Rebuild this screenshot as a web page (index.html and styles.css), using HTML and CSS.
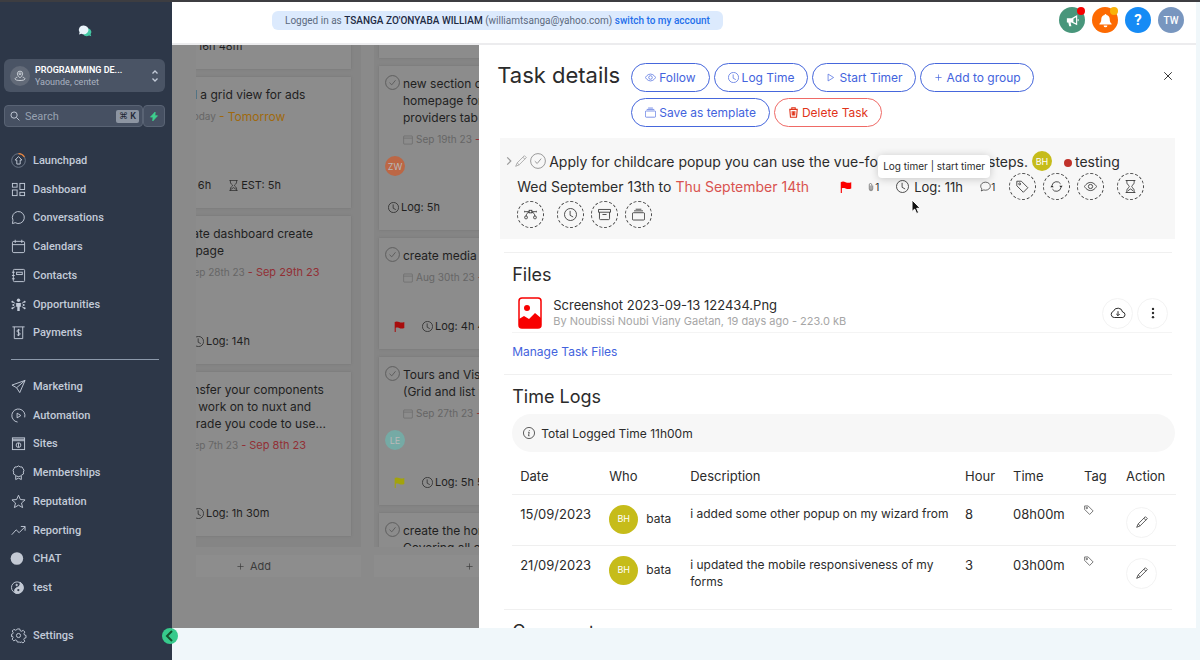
FILE: index.html
```html
<!DOCTYPE html>
<html lang="en">
<head>
    <meta charset="UTF-8">
    <meta name="viewport" content="width=device-width, initial-scale=1.0">
    <title>Task details</title>
    <link rel="stylesheet" href="styles.css">
</head>
<body>
    <!-- Icon sprite -->
    <svg class="sprite" aria-hidden="true">
        <symbol id="i-clock" viewBox="0 0 16 16"><circle cx="8" cy="8" r="7.4"/><path d="M7.5 3.5V9l3.8 2.1"/></symbol>
        <symbol id="i-eye" viewBox="0 0 16 16"><path d="M.6 8S3.300 3 8 3s7.400 5 7.400 5-2.700 5-7.400 5S.6 8 .6 8z"/><circle cx="8" cy="8" r="2.600"/></symbol>
        <symbol id="i-play" viewBox="0 0 16 16"><path d="M4.500 3v10l8-5z"/></symbol>
        <symbol id="i-plus" viewBox="0 0 16 16"><path d="M8 3.500v9M3.500 8h9"/></symbol>
        <symbol id="i-stack" viewBox="0 0 16 16"><path d="M4.500 1.500h7M2.500 3.500h11"/><rect x=".5" y="5.800" width="15" height="9" rx="1.300"/></symbol>
        <symbol id="i-trash" viewBox="0 0 16 16"><path d="M1.800 3.500h12.400M2.600 3.500l1 11.500h8.800l1-11.500M5.500 3V1h5v2M6 6l.3 6.500M8 6v6.500M10 6l-.3 6.500" stroke-width="1.600"/></symbol>
        <symbol id="i-x" viewBox="0 0 16 16"><path d="M2 2l12 12M14 2L2 14"/></symbol>
        <symbol id="i-right" viewBox="0 0 10 16"><path d="M2 2l6 6-6 6"/></symbol>
        <symbol id="i-pencil" viewBox="0 0 16 16"><path d="M12.500 .9l2.600 2.600-9.600 9.600L.9 15.100l2-4.600zM10.500 2.900l2.600 2.600M2.900 10.500l2.600 2.600"/></symbol>
        <symbol id="i-check" viewBox="0 0 16 16"><circle cx="8" cy="8" r="7.400"/><path d="M4.800 8.200l2.400 2.300 4-4.900"/></symbol>
        <symbol id="i-clip" viewBox="0 0 16 16"><path d="M4.500 3.500a2.500 2.500 0 0 1 5 0V12a1.500 1.500 0 0 1-3 0V5M4.500 3.500V12a3.500 3.500 0 0 0 7 0V5"/></symbol>
        <symbol id="i-chat" viewBox="0 0 16 16"><path d="M2.700 11.500A6.300 6.300 0 0 1 1 7.500C1 4.300 4.100 1.700 8 1.700s7 2.600 7 5.800-3.100 5.900-7 5.900c-.9 0-1.700-.1-2.500-.4L1.700 14.500c.7-1 1-1.800 1-3z"/></symbol>
        <symbol id="i-tag" viewBox="0 0 16 16"><path d="M1 1.500h5.600l8 8-5.600 5.600-8-8z"/><circle cx="4.500" cy="4.800" r="1.200"/></symbol>
        <symbol id="i-repeat" viewBox="0 0 16 16"><path d="M2.500 6.500a5.800 5.800 0 0 1 10.500-1.800M13.500 9.500A5.800 5.800 0 0 1 3 11.300"/><path d="M11.500 7.200h4L13.500 9.700zM.5 8.800h4L2.500 6.300z" fill="currentColor" stroke="none"/></symbol>
        <symbol id="i-hourglass" viewBox="0 0 16 16"><path d="M2 .6h12M2 15.400h12M3.500.6v2.500c0 2.800 3 3.200 3 4.900s-3 2.100-3 4.900v2.500M12.500.6v2.500c0 2.800-3 3.200-3 4.900s3 2.100 3 4.900v2.500M4.500 13.500L8 11l3.500 2.500"/></symbol>
        <symbol id="i-bezier" viewBox="0 0 16 16"><path d="M6 4.500H2M10 4.500h4M6.500 5C4 5.500 2.800 7.500 2.600 10M9.500 5c2.500.5 3.700 2.500 3.900 5"/><rect x="6.300" y="2.800" width="3.400" height="3.200"/><rect x=".9" y="10" width="3.200" height="3.200" rx="1"/><rect x="11.900" y="10" width="3.200" height="3.200" rx="1"/><circle cx="1" cy="4.500" r=".6"/><circle cx="15" cy="4.500" r=".6"/></symbol>
        <symbol id="i-archive" viewBox="0 0 16 16"><path d="M.6 1.800h14.800v3.400H.6zM1.800 5.200v7.800a1.300 1.300 0 0 0 1.300 1.300h9.800a1.300 1.300 0 0 0 1.300-1.300V5.200M5.500 8h5"/></symbol>
        <symbol id="i-cal" viewBox="0 0 16 16"><rect x="1" y="1.500" width="14" height="13" rx="1.200"/><path d="M1 5h14"/></symbol>
        <symbol id="i-flag" viewBox="0 0 16 16"><path d="M1 1.500c2-1 4-1 6.500 0s4.500 1 7.500 0v8.500c-3 1-5 1-7.500 0s-3.500-.8-5-.3V16H1z" fill="currentColor" stroke="none"/></symbol>
        <symbol id="i-info" viewBox="0 0 16 16"><circle cx="8" cy="8" r="7.400"/><path d="M6.800 7h1.500l-1 4.700h1.500M8.500 4.200v1"/></symbol>
        <symbol id="i-cloud" viewBox="0 0 16 16"><path d="M4.700 12.500H4A3.200 3.200 0 0 1 3.400 6.300 4.800 4.800 0 0 1 12.600 7a2.800 2.800 0 0 1 .2 5.500H4.700M8 6.200v4.300M6.300 9L8 10.700 9.700 9"/></symbol>
        <symbol id="i-dots" viewBox="0 0 16 16"><g fill="currentColor" stroke="none"><circle cx="8" cy="2.500" r="1.600"/><circle cx="8" cy="8" r="1.600"/><circle cx="8" cy="13.500" r="1.600"/></g></symbol>
    </svg>

    <aside class="sidebar">
        <svg class="logo" viewBox="0 0 14 12" aria-hidden="true">
            <path d="M8 3.500a4 3.800 0 0 1 4.600 5.800l.7 1.900-2.200-.7A4.500 4.200 0 0 1 5 9z" fill="#45c9a5" stroke="none"/>
            <path d="M5.500.5a4.800 4.400 0 1 1-2 8.300L1 9.600l.6-2.200A4.600 4.400 0 0 1 5.500.5z" fill="#eaf4fb" stroke="none"/>
        </svg>

        <button class="account">
            <span class="account-pin">
                <svg viewBox="0 0 16 16"><path d="M8 10.500S4.500 7.600 4.500 5a3.500 3.500 0 0 1 7 0c0 2.600-3.500 5.500-3.500 5.500z"/><circle cx="8" cy="5" r="1.300"/><path d="M4.500 9.500c-2 .5-3 1.400-3 2.300C1.500 13.300 4.500 14 8 14s6.500-.7 6.500-2.200c0-.9-1-1.800-3-2.300"/></svg>
            </span>
            <span class="account-text">
                <strong>PROGRAMMING DE...</strong>
                <span>Yaounde, centet</span>
            </span>
            <svg class="account-arrows" viewBox="0 0 8 14"><path d="M1.500 4.500L4 2l2.500 2.500M1.500 9.500L4 12l2.500-2.500"/></svg>
        </button>

        <div class="search-row">
            <label class="search">
                <svg viewBox="0 0 16 16"><circle cx="6.500" cy="6.500" r="5"/><path d="M10.300 10.300l4.700 4.700"/></svg>
                <input type="search" placeholder="Search" aria-label="Search">
                <kbd>⌘ K</kbd>
            </label>
            <button class="bolt" aria-label="Quick actions">
                <svg viewBox="0 0 10 12"><path d="M6.500 0L.3 6.800h3.400L3.300 12 9.700 5H6.300z" fill="#3ecf8e" stroke="#3ecf8e"/></svg>
            </button>
        </div>

        <nav class="nav nav-main">
            <a href="#"><svg viewBox="0 0 16 16"><circle cx="8" cy="8" r="7.300" stroke="#6d7889"/><path d="M8 .7a7.300 7.300 0 0 1 6.300 3.600" stroke="#e8833a" stroke-width="1.400"/><path d="M8 3.800l3.600 3.700H9.800v4.300H6.200V7.500H4.400z"/></svg>Launchpad</a>
            <a href="#"><svg viewBox="0 0 16 16"><rect x="1.500" y="1.500" width="5" height="4"/><rect x="1.500" y="8.500" width="5" height="6"/><rect x="9.500" y="1.500" width="5" height="6.500"/><rect x="9.500" y="11" width="5" height="3.500"/></svg>Dashboard</a>
            <a href="#"><svg viewBox="0 0 16 16"><path d="M4.500 13.500a6.400 6.400 0 1 0-2.400-2.600L1.500 14.500z"/></svg>Conversations</a>
            <a href="#"><svg viewBox="0 0 16 16"><rect x="1.500" y="2.500" width="13" height="12" rx="1.500"/><path d="M1.500 6h13M4.500.8v3.400M11.500.8v3.400"/></svg>Calendars</a>
            <a href="#"><svg viewBox="0 0 16 16"><rect x="2.500" y="1.500" width="12" height="13" rx="1"/><rect x="6" y="4.500" width="6" height="2.500"/><path d="M1 4.500h3M1 8h3M1 11.500h3"/></svg>Contacts</a>
            <a href="#"><svg viewBox="0 0 16 16"><g fill="currentColor" stroke="none"><circle cx="8" cy="3.500" r="1.800"/><path d="M5.500 6.500h5v4H9.300V15H6.700v-4.500H5.500z"/><circle cx="1.500" cy="5" r="1.100"/><circle cx="14.500" cy="5" r="1.100"/><circle cx="1.500" cy="12" r="1.100"/><circle cx="14.500" cy="12" r="1.100"/><circle cx="2.500" cy="8.500" r="1.100"/><circle cx="13.500" cy="8.500" r="1.100"/></g><path d="M1.500 5l3 1.800M14.500 5l-3 1.800M1.500 12l3-1.800M14.500 12l-3-1.800"/></svg>Opportunities</a>
            <a href="#"><svg viewBox="0 0 16 16"><path d="M1.500 2h13M3.500 2v12.500h9V2M9.800 5.800C9.300 5 6.300 4.800 6.300 6.500S9.800 7.800 9.800 9.500s-3 1.600-3.600.6M8 4.200v7.600"/></svg>Payments</a>
        </nav>
        <hr class="nav-line">
        <nav class="nav nav-more">
            <a href="#"><svg viewBox="0 0 16 16"><path d="M15 1.500L1 6.500l5 2.800 3.300 5.200zM15 1.500L6 9.300"/></svg>Marketing</a>
            <a href="#"><svg viewBox="0 0 16 16"><path d="M7 15A7 7 0 1 1 14.600 10M6.500 5.500l4 2.500-4 2.500z"/></svg>Automation</a>
            <a href="#"><svg viewBox="0 0 16 16"><rect x="1.500" y="2" width="13" height="12.500"/><path d="M1.500 5h13M1.500 3.500h13"/><circle cx="8" cy="9.700" r="2.500"/><path d="M8 7.500v4.500"/></svg>Sites</a>
            <a href="#"><svg viewBox="0 0 16 16"><path d="M8 1l1.800 1 2 .1 1 1.800 1 1.700-.6 2 .1 2-1.800 1.100L9.800 12 8 12.300 6.200 12l-1.700-1.300-1.800-1.100.1-2-.6-2 1-1.700 1-1.800 2-.1z"/><path d="M5 11.500v4l3-1.500 3 1.500v-4"/></svg>Memberships</a>
            <a href="#"><svg viewBox="0 0 16 16"><path d="M8 1.300l2 4.600 5 .4-3.800 3.300 1.200 4.900L8 11.900l-4.400 2.600 1.200-4.900L1 6.300l5-.4z"/></svg>Reputation</a>
            <a href="#"><svg viewBox="0 0 16 16"><path d="M.8 12.500L5.500 7.300l3.200 3L15 4M10.500 3.700H15v4.500"/></svg>Reporting</a>
            <a href="#"><svg viewBox="0 0 16 16"><circle cx="6.300" cy="8" r="6.700" fill="#c3c9d4" stroke="none"/></svg>CHAT</a>
            <a href="#"><svg viewBox="0 0 16 16"><circle cx="6.500" cy="8" r="6"/><path d="M9.500 2.500a6 6 0 0 1-5 11.400C3 10.500 4.500 8.800 6.500 8s4-2.500 3-5.500z" fill="#c3c9d4"/><circle cx="6" cy="5.300" r=".8" fill="#c3c9d4"/><circle cx="7.800" cy="10.700" r="1.200" fill="#2d3748" stroke="none"/></svg>test</a>
        </nav>
        <div class="nav nav-settings">
            <a href="#"><svg viewBox="0 0 16 16"><path d="M6.700 1h2.600l.5 1.900 1.500.6 1.700-1 1.800 1.800-1 1.700.6 1.500 1.600.4v2.500l-1.700.5-.6 1.400 1 1.800-1.900 1.800-1.700-1-1.400.6L9.300 15H6.700l-.5-1.700-1.500-.6-1.700 1-1.800-1.800 1-1.700-.6-1.500L.5 9.200V6.700l1.200-.3.6-1.500-1-1.700 1.800-1.800 1.700 1 1.400-.6z"/><circle cx="8" cy="8" r="2.200"/></svg>Settings</a>
            <button class="collapse" aria-label="Collapse menu"><svg viewBox="0 0 16 16"><path d="M10 3L5 8l5 5" stroke-width="2"/></svg></button>
        </div>
    </aside>

    <div class="main">
        <header class="topbar">
            <p class="login-note">Logged in as <strong>TSANGA ZO'ONYABA WILLIAM</strong> (williamtsanga@yahoo.com) <a href="#">switch to my account</a></p>
            <div class="top-icons">
                <button class="round green" aria-label="Announcements">
                    <svg viewBox="0 0 16 16"><path d="M2 5.500h5L13 2v11L7 10H6l.8 4H4.500L3.500 10H2z" fill="#fff" stroke="none"/><path d="M9 6v3.500l2.800 1.500V4.500z" fill="#48967b" stroke="none"/><path d="M14 6.500v2.200" stroke="#fff"/></svg>
                    <span class="dot dot-red"></span>
                </button>
                <button class="round orange" aria-label="Notifications">
                    <svg viewBox="0 0 16 16"><path d="M8 1a1 1 0 0 1 1 1c2.300.5 3.500 2.300 3.500 4.500 0 3 .8 4 2 5v.8h-13v-.8c1.200-1 2-2 2-5C3.500 4.300 4.700 2.500 7 2a1 1 0 0 1 1-1zM6 13.300h4a2 2 0 0 1-4 0z" fill="#fff" stroke="none"/></svg>
                    <span class="dot dot-yellow"></span>
                </button>
                <button class="round blue" aria-label="Help">?</button>
                <button class="round user">TW</button>
            </div>
        </header>

        <div class="workspace">
            <section class="board">
                <div class="columns">
                    <div class="column">
                        <div class="list">
                            <article class="card card-first-tall">
                                <div class="card-foot"><span><svg><use href="#i-clock"/></svg>Log: 16h 48m</span></div>
                            </article>
                            <article class="card card-s">
                                <h3>Add a grid view for ads</h3>
                                <p class="dates"><svg><use href="#i-cal"/></svg>Today <b class="soon">- Tomorrow</b></p>
                                <div class="card-foot"><span><svg><use href="#i-clock"/></svg>Log: 6h</span><span><svg><use href="#i-hourglass"/></svg>EST: 5h</span></div>
                            </article>
                            <article class="card card-m">
                                <h3>create dashboard create<br>the page</h3>
                                <p class="dates"><svg><use href="#i-cal"/></svg>Sep 28th 23 <b>- Sep 29th 23</b></p>
                                <div class="card-foot"><svg class="flag red"><use href="#i-flag"/></svg><span><svg><use href="#i-clock"/></svg>Log: 14h</span></div>
                            </article>
                            <article class="card card-l">
                                <h3>Transfer your components you work on to nuxt and upgrade you code to use...</h3>
                                <p class="dates"><svg><use href="#i-cal"/></svg>Sep 7th 23 <b>- Sep 8th 23</b></p>
                                <div class="card-foot"><svg class="flag red"><use href="#i-flag"/></svg><span><svg><use href="#i-clock"/></svg>Log: 1h 30m</span></div>
                            </article>
                        </div>
                        <button class="add"><svg><use href="#i-plus"/></svg>Add</button>
                    </div>
                    <div class="column">
                        <div class="list">
                            <article class="card card-first"></article>
                            <article class="card card-l">
                                <svg class="card-check"><use href="#i-check"/></svg>
                                <h3>new section on the<br>homepage for the<br>providers tab</h3>
                                <p class="dates"><svg><use href="#i-cal"/></svg>Sep 19th 23 <b>- Sep 20th 23</b></p>
                                <span class="avatar coral">ZW</span>
                                <div class="card-foot"><span><svg><use href="#i-clock"/></svg>Log: 5h</span></div>
                            </article>
                            <article class="card card-xs">
                                <svg class="card-check"><use href="#i-check"/></svg>
                                <h3>create media library</h3>
                                <p class="dates"><svg><use href="#i-cal"/></svg>Aug 30th 23 <b>- Sep 1st 23</b></p>
                                <div class="card-foot"><svg class="flag red"><use href="#i-flag"/></svg><span><svg><use href="#i-clock"/></svg>Log: 4h 45m</span></div>
                            </article>
                            <article class="card card-m">
                                <svg class="card-check"><use href="#i-check"/></svg>
                                <h3>Tours and Visits<br>(Grid and list view)</h3>
                                <p class="dates"><svg><use href="#i-cal"/></svg>Sep 27th 23 <b>- Sep 28th 23</b></p>
                                <span class="avatar teal">LE</span>
                                <div class="card-foot"><svg class="flag yellow"><use href="#i-flag"/></svg><span><svg><use href="#i-clock"/></svg>Log: 5h 50m</span></div>
                            </article>
                            <article class="card card-m">
                                <svg class="card-check"><use href="#i-check"/></svg>
                                <h3>create the homepage<br>Covering all cases</h3>
                            </article>
                        </div>
                        <button class="add"><svg><use href="#i-plus"/></svg>Add</button>
                    </div>
                </div>
            </section>

            <section class="drawer">
                <div class="drawer-head">
                    <h1>Task details</h1>
                    <div class="actions">
                        <button class="pill"><svg><use href="#i-eye"/></svg>Follow</button>
                        <button class="pill"><svg><use href="#i-clock"/></svg>Log Time</button>
                        <button class="pill wide"><svg><use href="#i-play"/></svg>Start Timer</button>
                        <button class="pill wide"><svg><use href="#i-plus"/></svg>Add to group</button>
                        <button class="pill"><svg><use href="#i-stack"/></svg>Save as template</button>
                        <button class="pill danger"><svg><use href="#i-trash"/></svg>Delete Task</button>
                    </div>
                    <button class="close" aria-label="Close"><svg><use href="#i-x"/></svg></button>
                </div>

                <div class="task">
                    <div class="task-title">
                        <svg class="chevron"><use href="#i-right"/></svg>
                        <svg class="edit"><use href="#i-pencil"/></svg>
                        <svg class="check"><use href="#i-check"/></svg>
                        <span>Apply for childcare popup you can use the vue-form wizard in the steps.</span>
                        <span class="avatar olive">BH</span>
                        <span class="status">testing</span>
                    </div>
                    <div class="task-meta">
                        <span class="range">Wed September 13th to <b>Thu September 14th</b></span>
                        <svg class="flag bright"><use href="#i-flag"/></svg>
                        <span class="count"><svg><use href="#i-clip"/></svg>1</span>
                        <span class="log">
                            <svg><use href="#i-clock"/></svg>Log: 11h
                            <span class="tooltip" role="tooltip">Log timer | start timer</span>
                            <svg class="cursor" viewBox="0 0 10 16"><path d="M1 1v11.500l2.700-2.400 1.900 4.400 2-.9-1.900-4.300h3.500z" fill="#111" stroke="#fff"/></svg>
                        </span>
                        <span class="count"><svg class="chat"><use href="#i-chat"/></svg>1</span>
                        <button class="tool" aria-label="Tags"><svg><use href="#i-tag"/></svg></button>
                        <button class="tool" aria-label="Repeat"><svg><use href="#i-repeat"/></svg></button>
                        <button class="tool apart" aria-label="Followers"><svg><use href="#i-eye"/></svg></button>
                        <button class="tool" aria-label="Estimate"><svg><use href="#i-hourglass"/></svg></button>
                    </div>
                    <div class="task-tools">
                        <button class="tool apart" aria-label="Dependencies"><svg><use href="#i-bezier"/></svg></button>
                        <button class="tool" aria-label="Time"><svg><use href="#i-clock"/></svg></button>
                        <button class="tool" aria-label="Archive"><svg><use href="#i-archive"/></svg></button>
                        <button class="tool" aria-label="Template"><svg><use href="#i-stack"/></svg></button>
                    </div>
                </div>

                <section class="block">
                    <h2>Files</h2>
                    <div class="file">
                        <svg class="file-icon" viewBox="0 0 24 32"><rect x="1" y="1" width="22" height="30" rx="3" fill="#fff" stroke="#f80000" stroke-width="1.500"/><circle cx="9" cy="11" r="3" fill="#f80000" stroke="none"/><path d="M1 22l5-3 5 3 6-6 6 5v7a3 3 0 0 1-3 3H4a3 3 0 0 1-3-3z" fill="#f80000" stroke="none"/></svg>
                        <div class="file-text">
                            <strong>Screenshot 2023-09-13 122434.Png</strong>
                            <span>By Noubissi Noubi Viany Gaetan, 19 days ago - 223.0 kB</span>
                        </div>
                        <button class="ghost" aria-label="Download"><svg class="cloud"><use href="#i-cloud"/></svg></button>
                        <button class="ghost" aria-label="More"><svg><use href="#i-dots"/></svg></button>
                    </div>
                    <a class="manage" href="#">Manage Task Files</a>
                </section>

                <section class="block">
                    <h2>Time Logs</h2>
                    <p class="total"><svg><use href="#i-info"/></svg>Total Logged Time 11h00m</p>
                    <table class="logs">
                        <thead>
                            <tr>
                                <th class="c-date">Date</th>
                                <th class="c-who">Who</th>
                                <th>Description</th>
                                <th class="c-hour">Hour</th>
                                <th class="c-time">Time</th>
                                <th class="c-tag">Tag</th>
                                <th class="c-action">Action</th>
                            </tr>
                        </thead>
                        <tbody>
                            <tr>
                                <td>15/09/2023</td>
                                <td><span class="who"><span class="avatar olive big">BH</span>bata</span></td>
                                <td class="desc">i added some other popup on my wizard from</td>
                                <td>8</td>
                                <td>08h00m</td>
                                <td class="tag"><svg><use href="#i-tag"/></svg></td>
                                <td><button class="ghost" aria-label="Edit log"><svg><use href="#i-pencil"/></svg></button></td>
                            </tr>
                            <tr>
                                <td>21/09/2023</td>
                                <td><span class="who"><span class="avatar olive big">BH</span>bata</span></td>
                                <td class="desc">i updated the mobile responsiveness of my forms</td>
                                <td>3</td>
                                <td>03h00m</td>
                                <td class="tag"><svg><use href="#i-tag"/></svg></td>
                                <td><button class="ghost" aria-label="Edit log"><svg><use href="#i-pencil"/></svg></button></td>
                            </tr>
                        </tbody>
                    </table>
                </section>

                <section class="block">
                    <h2>Comments</h2>
                </section>
            </section>
        </div>
    </div>
</body>
</html>
```
FILE: styles.css
```css
* {
    box-sizing: border-box;
}
body {
    margin: 0;
    height: 100vh;
    display: flex;
    overflow: hidden;
    border-top: 2px solid #3d3d41;
    background-color: #f0f7fa;
    color: #2b2b2b;
    font-family: Inter, sans-serif;
    font-size: 13px;
}
h1, h2, h3, p {
    margin: 0;
    font-weight: 400;
}
b {
    font-weight: 400;
}
button {
    border: none;
    padding: 0;
    background: none;
    color: inherit;
    font: inherit;
    cursor: pointer;
}
a {
    text-decoration: none;
}
svg {
    width: 12px;
    height: 12px;
    flex: none;
    fill: none;
    stroke: currentColor;
    overflow: visible;
}
.sprite {
    position: absolute;
    width: 0;
    height: 0;
}

/* Sidebar */
.sidebar {
    width: 172px;
    flex: none;
    display: flex;
    flex-direction: column;
    background-color: #2d3748;
    color: #c3cbd8;
    font-family: Roboto, sans-serif;
}
.logo {
    width: 14px;
    height: 12px;
    margin: 23px auto 22px 78px;
}
.account {
    display: flex;
    align-items: center;
    gap: 5px;
    height: 33px;
    margin: 0 7px 13px 4px;
    padding: 0 6px;
    border-radius: 6px;
    background-color: #4a5465;
    text-align: left;
}
.account-pin {
    display: flex;
    align-items: center;
    justify-content: center;
    width: 20px;
    height: 20px;
    border-radius: 50%;
    background-color: #626a78;
    color: #e8ecf1;
}
.account-text {
    flex: 1;
    display: flex;
    flex-direction: column;
    line-height: 12px;
    font-size: 9px;
    color: #a9b2c0;
}
.account-text strong {
    font-weight: 600;
    color: #fff;
}
.account-arrows {
    width: 8px;
    height: 14px;
    stroke-width: 1.3;
}
.search-row {
    display: flex;
    margin: 0 7px 19px 4px;
}
.search {
    flex: 1;
    min-width: 0;
    display: flex;
    align-items: center;
    gap: 5px;
    height: 22px;
    padding: 0 3px 0 5px;
    border: 1px solid #596374;
    border-radius: 4px;
    background-color: #465062;
}
.search svg {
    width: 10px;
    height: 10px;
    stroke-width: 1.5;
}
.search input {
    flex: 1;
    min-width: 0;
    padding: 0;
    border: none;
    outline: none;
    background: none;
    color: #fff;
    font: 11px Roboto, sans-serif;
}
.search input::placeholder {
    color: #98a2b1;
}
.search kbd {
    padding: 0 3px;
    border-radius: 2px;
    background-color: #8d95a2;
    color: #1d2533;
    font: 500 9px/13px Roboto, "DejaVu Sans", sans-serif;
}
.bolt {
    display: flex;
    align-items: center;
    justify-content: center;
    width: 22px;
    border: 1px solid #596374;
    border-radius: 4px;
    background-color: #465062;
}
.bolt svg {
    width: 8px;
    height: 9px;
}
.nav {
    display: flex;
    flex-direction: column;
    padding-left: 11px;
}
.nav a {
    flex: 1;
    display: flex;
    align-items: center;
    gap: 7px;
    color: #c3cbd8;
    font-size: 11px;
    font-weight: 500;
}
.nav svg {
    width: 15px;
    height: 15px;
}
.nav-main {
    flex: 7;
}
.nav-more {
    flex: 8;
}
.nav-line {
    width: 148px;
    margin: 12px 0 12px 11px;
    border: none;
    border-top: 1px solid #8c99ab;
}
.nav-settings {
    position: relative;
    height: 34px;
    margin: 16px 0 8px;
}
.collapse {
    position: absolute;
    right: -6px;
    top: 10px;
    width: 16px;
    height: 16px;
    border-radius: 50%;
    background-color: #37ca8c;
    color: #14532d;
}
.collapse svg {
    display: block;
    width: 16px;
    height: 16px;
}

/* Top bar */
.main {
    flex: 1;
    min-width: 0;
    display: flex;
    flex-direction: column;
    padding: 0 4px 32px 0;
}
.topbar {
    display: flex;
    align-items: center;
    justify-content: space-between;
    height: 43px;
    padding: 0 12px 5px 100px;
    border-bottom: 2px solid #ececee;
    background-color: #fff;
    font-family: Roboto, sans-serif;
}
.login-note {
    padding: 0 13px;
    border-radius: 6px;
    background-color: #dceafd;
    color: #5c6b80;
    font-size: 10px;
    line-height: 19px;
}
.login-note strong {
    font-weight: 500;
    color: #1e2a44;
}
.login-note a {
    font-weight: 500;
    color: #1f6feb;
}
.top-icons {
    display: flex;
    gap: 7px;
}
.round {
    position: relative;
    display: flex;
    align-items: center;
    justify-content: center;
    width: 26px;
    height: 26px;
    border-radius: 50%;
    color: #fff;
    font-size: 10px;
    font-weight: 500;
}
.round svg {
    width: 15px;
    height: 15px;
}
.green {
    background-color: #48967b;
}
.orange {
    background-color: #fd6a02;
}
.blue {
    background-color: #168bf5;
    font-size: 15px;
    font-weight: 700;
}
.user {
    background-color: #7896bf;
}
.dot {
    position: absolute;
    top: 0;
    right: 0;
    width: 8px;
    height: 8px;
    border-radius: 50%;
}
.dot-red {
    background-color: #f50000;
}
.dot-yellow {
    background-color: #f9b208;
}

/* Board behind the drawer */
.workspace {
    flex: 1;
    min-height: 0;
    display: grid;
    grid-template-columns: 3fr 7fr;
}
.board {
    min-width: 0;
    min-height: 0;
    padding: 0 0 51px 24px;
    background-color: #8a8a8a;
    color: #1f1f1f;
    overflow: hidden;
}
.columns {
    height: 100%;
    overflow: hidden;
    display: flex;
    gap: 13px;
}
.column {
    flex: none;
    display: flex;
    flex-direction: column;
    width: 216px;
}
.column:first-child {
    margin-left: -51px;
}
.list {
    flex: 1;
    min-height: 0;
    overflow: hidden;
    padding: 0 10px 0 5px;
    background-color: #858585;
    display: flex;
    flex-direction: column;
    gap: 8px;
}
.card {
    position: relative;
    flex: none;
    display: flex;
    flex-direction: column;
    padding: 9px 10px 15px 24px;
    background-color: #8c8c8c;
    box-shadow: 0 0 2px #757575;
}
.card-xs {
    min-height: 111px;
}
.card-s {
    min-height: 131px;
}
.card-m {
    min-height: 148px;
}
.card-l {
    min-height: 164px;
}
.card-first {
    min-height: 13px;
    padding: 0;
}
.card-first-tall {
    min-height: 64px;
    margin-top: -40px;
}
.card-check {
    position: absolute;
    left: 6px;
    top: 9px;
    width: 15px;
    height: 15px;
    color: #5c5c5c;
}
.card h3 {
    font-size: 12px;
    line-height: 17px;
}
.dates {
    display: flex;
    align-items: center;
    gap: 3px;
    margin-top: 5px;
    color: #666;
    font-size: 10px;
    line-height: 17px;
    white-space: nowrap;
}
.dates svg {
    width: 10px;
    height: 10px;
}
.dates b {
    color: #922f35;
    font-size: 11px;
}
.dates .soon {
    color: #a0690c;
    font-size: 12px;
}
.avatar {
    display: flex;
    align-items: center;
    justify-content: center;
    flex: none;
    width: 20px;
    height: 20px;
    border-radius: 50%;
    color: #fff;
    font-size: 9px;
}
.card .avatar {
    margin: 8px 0 0 -18px;
    color: #b9b9b9;
}
.card .coral {
    background-color: #bc6745;
}
.card .teal {
    background-color: #75aaa5;
}
.card-foot {
    display: flex;
    align-items: center;
    gap: 17px;
    margin: auto 0 0 -15px;
    font-size: 11px;
    line-height: 16px;
    white-space: nowrap;
}
.card-foot span {
    display: flex;
    align-items: center;
    gap: 2px;
}
.card-foot svg {
    width: 11px;
    height: 11px;
}
.card-foot .flag {
    margin-left: 6px;
}
.red {
    color: #a80c0c;
}
.yellow {
    color: #a3a30c;
}
.bright {
    color: #fb0000;
}
.add {
    display: flex;
    align-items: center;
    justify-content: center;
    gap: 4px;
    height: 22px;
    margin-top: 8px;
    background-color: #8d8d8d;
    color: #3c3c3c;
    font-size: 11px;
}
.add svg {
    width: 11px;
    height: 11px;
}

/* Task drawer */
.drawer {
    min-width: 0;
    padding: 18px 21px 0;
    background-color: #fff;
    overflow: hidden;
}
.drawer-head {
    display: flex;
    align-items: flex-start;
    margin-left: -3px;
}
.drawer h1 {
    width: 134px;
    flex: none;
    font-size: 22px;
    line-height: 25px;
}
.actions {
    flex: 1;
    display: flex;
    flex-wrap: wrap;
    gap: 6px 4px;
    max-width: 430px;
}
.pill {
    display: flex;
    align-items: center;
    gap: 3px;
    height: 29px;
    padding: 0 13px;
    border: 1px solid #4667dc;
    border-radius: 15px;
    color: #4363dd;
    font-size: 12px;
}
.pill.wide {
    padding: 0 12px;
}
.pill.danger {
    border-color: #ef6a66;
    color: #e0341a;
}
.pill svg {
    width: 11px;
    height: 11px;
}
.close {
    margin: 8px 2px 0 auto;
}
.close svg {
    display: block;
    width: 10px;
    height: 10px;
    stroke-width: 1.5;
}
.task {
    margin-top: 11px;
    padding: 12px 6px 11px;
    background-color: #f7f7f7;
}
.task-title {
    display: flex;
    align-items: center;
    gap: 3px;
    height: 22px;
    font-size: 14px;
    white-space: nowrap;
}
.task-title svg {
    color: #9a9a9a;
}
.task-title .chevron {
    width: 6px;
    height: 10px;
    stroke-width: 2;
}
.task-title .check {
    width: 16px;
    height: 16px;
}
.task-title .avatar {
    margin: 0 9px 0 1px;
}
.olive {
    background-color: #c6bc1a;
}
.status::before {
    content: "";
    display: inline-block;
    width: 8px;
    height: 8px;
    margin-right: 3px;
    border-radius: 50%;
    background-color: #c0322b;
}
.task-meta,
.task-tools {
    display: flex;
    align-items: center;
    gap: 7px;
    padding-left: 11px;
}
.task-meta {
    margin-top: 1px;
    white-space: nowrap;
}
.range {
    width: 316px;
    font-size: 14px;
}
.range b {
    color: #d9534f;
}
.count {
    display: flex;
    align-items: center;
    width: 22px;
    margin-left: 8px;
    font-size: 10px;
}
.count svg {
    width: 8px;
    height: 10px;
}
.count .chat {
    width: 11px;
    height: 11px;
}
.log {
    position: relative;
    display: flex;
    align-items: center;
    gap: 5px;
    width: 69px;
}
.log svg {
    width: 13px;
    height: 13px;
}
.tooltip {
    position: absolute;
    left: -18px;
    bottom: 17px;
    padding: 3px 5px;
    border-radius: 4px;
    background-color: #fff;
    box-shadow: 0 1px 8px rgba(0, 0, 0, 0.2);
    font-size: 10px;
    line-height: 17px;
}
.log .cursor {
    position: absolute;
    left: 15px;
    top: 20px;
    width: 10px;
    height: 16px;
}
.tool {
    display: flex;
    align-items: center;
    justify-content: center;
    flex: none;
    width: 27px;
    height: 27px;
    border: 1px dashed #4a4a4a;
    border-radius: 50%;
}
.tool svg {
    width: 13px;
    height: 13px;
}
.apart {
    margin-right: 6px;
}
.task-tools {
    padding: 1px 0 0 11px;
}
.block {
    margin: 13px 3px 0 4px;
    padding: 11px 0 0 8px;
    border-top: 1px solid #f0f0f0;
}
.block h2 {
    font-size: 18px;
    line-height: 22px;
}
.file {
    display: flex;
    align-items: center;
    gap: 4px;
    height: 39px;
    margin-top: 8px;
    padding: 0 4px 0 6px;
    border-bottom: 1px solid #f4f4f4;
}
.file-icon {
    width: 24px;
    height: 32px;
}
.file-text {
    flex: 1;
    display: flex;
    flex-direction: column;
    margin-left: 7px;
    font-size: 11px;
    line-height: 16px;
    color: #a6a6a6;
}
.file-text strong {
    font-size: 13px;
    font-weight: 400;
    color: #2b2b2b;
}
.ghost {
    display: flex;
    align-items: center;
    justify-content: center;
    width: 31px;
    height: 31px;
    border: 1px solid #f3f3f3;
    border-radius: 50%;
}
.ghost .cloud {
    width: 16px;
    height: 16px;
}
.manage {
    display: block;
    margin-top: 10px;
    color: #4363dd;
    font-size: 12px;
    line-height: 18px;
}
.total {
    display: flex;
    align-items: center;
    gap: 6px;
    height: 38px;
    margin: 6px -3px 0 0;
    padding: 0 11px;
    border-radius: 19px;
    background-color: #f7f7f7;
    font-size: 12px;
}
.logs {
    width: calc(100% + 4px);
    table-layout: fixed;
    border-collapse: collapse;
    font-size: 13px;
}
.logs th {
    height: 42px;
    padding: 6px 0 0 8px;
    font-weight: 400;
    text-align: left;
}
.logs td {
    height: 51px;
    padding: 10px 0 0 8px;
    border-top: 1px solid #efefef;
    line-height: 18px;
    vertical-align: top;
}
.c-date {
    width: 89px;
}
.c-who {
    width: 81px;
}
.c-hour {
    width: 48px;
}
.c-time {
    width: 71px;
}
.c-tag {
    width: 42px;
}
.c-action {
    width: 58px;
}
.who {
    display: flex;
    align-items: center;
    gap: 8px;
    font-size: 12px;
}
.avatar.big {
    width: 29px;
    height: 29px;
}
.logs .desc {
    padding-right: 4px;
    font-size: 12px;
    line-height: 17px;
}
.logs .tag svg {
    width: 10px;
    height: 10px;
    vertical-align: top;
}
.logs .ghost {
    margin-top: 2px;
}
```
